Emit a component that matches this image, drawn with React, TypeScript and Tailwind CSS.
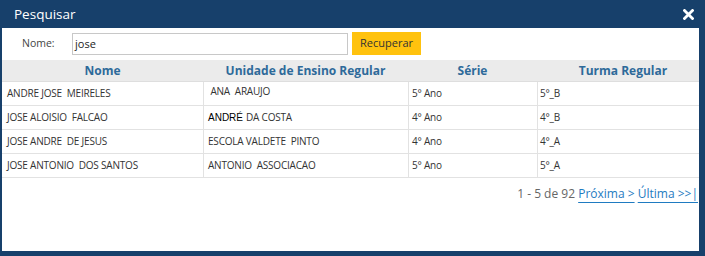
const rows = [
  { nome: 'ANDRE JOSE  MEIRELES', unidade: ' ANA  ARAUJO', serie: '5° Ano', turma: '5°_B', raised: true },
  { nome: 'JOSE ALOISIO  FALCAO', unidade: 'DA COSTA', serie: '4° Ano', turma: '4°_B', andre: true },
  { nome: 'JOSE ANDRE  DE JESUS', unidade: 'ESCOLA VALDETE  PINTO', serie: '4° Ano', turma: '4°_A' },
  { nome: 'JOSE ANTONIO  DOS SANTOS', unidade: 'ANTONIO  ASSOCIACAO', serie: '5° Ano', turma: '5°_A' },
];

const headers = [
  { label: 'Nome', cls: '' },
  { label: 'Unidade de Ensino Regular', cls: '' },
  { label: 'Série', cls: '' },
  { label: 'Turma Regular', cls: 'pl-[10px]' },
];

const font = { fontFamily: '"Open Sans", "Noto Sans", sans-serif' };

const CloseIcon = () => (
  <svg width="11" height="11" viewBox="0 0 11 11">
    <path d="M1.5 1.5 L9.5 9.5 M9.5 1.5 L1.5 9.5" stroke="white" strokeWidth="2.8" strokeLinecap="square" />
  </svg>
);

export default function App() {
  return (
    <div
      className="w-[705px] h-[256px] bg-[#17406B] flex flex-col pl-[2px] pr-[6px] pb-[5px]"
      style={font}
    >
      {/* title bar */}
      <div className="h-[28px] shrink-0 flex items-center justify-between pl-[12px] pr-[5px] pt-[1px]">
        <span className="text-white text-[13.5px] leading-none">Pesquisar</span>
        <CloseIcon />
      </div>

      <div className="flex-1 bg-white flex flex-col">
        {/* search row */}
        <div className="h-[32px] shrink-0 flex items-start pt-[4px] pl-[20px]">
          <span className="w-[50px] h-[23px] flex items-center text-[10.5px] text-[#444]">Nome:</span>
          <div className="w-[276px] h-[22px] mt-[1px] border border-[#c8c8c8] flex items-center pl-[2px] text-[11px] text-[#222]">
            jose
          </div>
          <button className="ml-[4px] w-[69px] h-[23px] bg-[#FFC20E] text-[11px] text-[#333] flex items-center justify-center">
            Recuperar
          </button>
        </div>

        {/* table */}
        <div className="grid grid-cols-[201px_205px_129px_1fr]">
          {headers.map((h) => (
            <div
              key={h.label}
              className={`h-[22px] bg-[#EBEBEB] border-b border-[#dedede] flex items-center justify-center text-[12px] font-bold text-[#2E6A9A] ${h.cls}`}
            >
              {h.label}
            </div>
          ))}
          {rows.map((r) => (
            <div key={r.nome} className="contents text-[10px] text-[#333] tracking-[-0.2px]">
              <div className="h-[24px] border-b border-[#e2e2e2] flex items-center pl-[5px] whitespace-pre">{r.nome}</div>
              <div
                className={`h-[24px] border-b border-l border-[#e2e2e2] flex items-center pl-[4px] whitespace-pre ${r.raised ? 'pb-[4px]' : ''}`}
              >
                {r.andre && (
                  <span className="text-[10px] text-black tracking-normal mr-[3px]" style={{ fontFamily: '"Liberation Sans", Arial, sans-serif' }}>
                    ANDRÉ
                  </span>
                )}
                {r.unidade}
              </div>
              <div className="h-[24px] border-b border-l border-[#e2e2e2] flex items-center pl-[3px]">{r.serie}</div>
              <div className="h-[24px] border-b border-l border-[#e2e2e2] flex items-center pl-[2px]">{r.turma}</div>
            </div>
          ))}
        </div>

        {/* pagination */}
        <div className="mt-[8px] flex justify-end pr-[1px] text-[12px] leading-[16px]">
          <span className="text-[#666]">1 - 5 de 92&nbsp;</span>
          <a className="text-[#1F7BC1] underline underline-offset-[4px]">Próxima &gt;</a>
          <span>&nbsp;</span>
          <a className="text-[#1F7BC1] underline underline-offset-[4px]">Última &gt;&gt;|</a>
        </div>
      </div>
    </div>
  );
}
